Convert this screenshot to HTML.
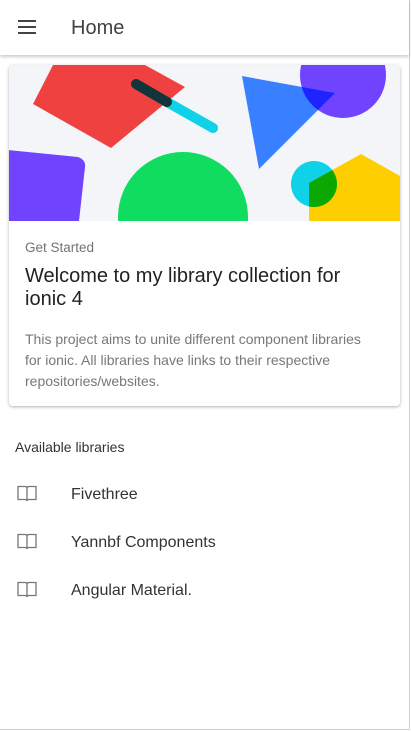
<!DOCTYPE html>
<html><head><meta charset="utf-8"><style>
*{margin:0;padding:0;box-sizing:border-box}
html,body{width:411px;height:731px;overflow:hidden;background:#fff;font-family:"Liberation Sans",Roboto,sans-serif}
.frame{position:absolute;left:0;top:0;width:410px;height:730px;border-right:1px solid #d0d0d0;border-bottom:1px solid #d0d0d0}
.hdr{position:absolute;left:0;top:0;width:409px;height:55px;background:#fff;box-shadow:0 2px 3px rgba(0,0,0,.2)}
.ham{position:absolute;left:18px;top:20px;width:18px}
.ham i{display:block;height:2px;background:#424242;margin-bottom:4px}
.title{position:absolute;left:71px;top:17px;font-size:20px;color:#424242}
.card{position:absolute;left:9px;top:65px;width:391px;height:341px;background:#fff;border-radius:4px;box-shadow:0 1px 3px rgba(0,0,0,.3);overflow:hidden}
.sub{position:absolute;left:16px;top:175px;font-size:13.5px;color:#737373}
.h{position:absolute;left:16px;top:200px;font-size:20px;line-height:23px;color:#222;width:340px}
.p{position:absolute;left:16px;top:264px;font-size:14px;line-height:21px;color:#777;width:350px}
.lh{position:absolute;left:15px;top:439px;font-size:14px;color:#333}
.item{position:absolute;left:71px;font-size:16px;color:#333}
.bk{position:absolute;left:17px}
</style></head><body>
<div class="frame"></div>
<div class="hdr"><div class="ham"><i></i><i></i><i></i></div><div class="title">Home</div></div>
<div class="card">
<svg width="391" height="156" viewBox="9 65 391 156" style="position:absolute;left:0;top:0">
<rect x="9" y="65" width="391" height="156" fill="#f4f5f8"/>
<polygon points="53,65 145,65 185,87 111,148 33,104" fill="#f04141"/>
<line x1="167" y1="102" x2="213" y2="128" stroke="#0fd2e8" stroke-width="10" stroke-linecap="round"/>
<line x1="136" y1="84" x2="167" y2="102" stroke="#12343b" stroke-width="10" stroke-linecap="round"/>
<circle cx="343" cy="75" r="43" fill="#7044ff"/>
<polygon points="242,76 335,93 259,169" fill="#3880ff" />
<clipPath id="c1"><circle cx="343" cy="75" r="43"/></clipPath>
<polygon points="242,76 335,93 259,169" fill="#1d24ff" clip-path="url(#c1)"/>
<path d="M8,150 L78,157 Q86,160 85,167 L79,221 L8,221Z" fill="#7044ff"/>
<circle cx="183" cy="217" r="65" fill="#10dc60"/>
<circle cx="314" cy="184" r="23" fill="#0fd2e8"/>
<polygon points="309,183 361,154 400,176 400,221 309,221" fill="#ffce00"/>
<clipPath id="c2"><polygon points="309,183 361,154 400,176 400,221 309,221"/></clipPath>
<circle cx="314" cy="184" r="23" fill="#0aa800" clip-path="url(#c2)"/>
</svg>
<div class="sub">Get Started</div>
<div class="h">Welcome to my library collection for ionic 4</div>
<div class="p">This project aims to unite different component libraries for ionic. All libraries have links to their respective repositories/websites.</div>
</div>
<div class="lh">Available libraries</div>
<svg class="bk" style="top:485px" width="20" height="17" viewBox="0 0 20 17"><path d="M1 1.5 H8 Q10 1.5 10 3.5 V16 Q10 14.5 8 14.5 H1Z M19 1.5 H12 Q10 1.5 10 3.5 V16 Q10 14.5 12 14.5 H19Z" fill="none" stroke="#777" stroke-width="1.3"/></svg>
<div class="item" style="top:486px">Fivethree</div>
<svg class="bk" style="top:533px" width="20" height="17" viewBox="0 0 20 17"><path d="M1 1.5 H8 Q10 1.5 10 3.5 V16 Q10 14.5 8 14.5 H1Z M19 1.5 H12 Q10 1.5 10 3.5 V16 Q10 14.5 12 14.5 H19Z" fill="none" stroke="#777" stroke-width="1.3"/></svg>
<div class="item" style="top:534px">Yannbf Components</div>
<svg class="bk" style="top:581px" width="20" height="17" viewBox="0 0 20 17"><path d="M1 1.5 H8 Q10 1.5 10 3.5 V16 Q10 14.5 8 14.5 H1Z M19 1.5 H12 Q10 1.5 10 3.5 V16 Q10 14.5 12 14.5 H19Z" fill="none" stroke="#777" stroke-width="1.3"/></svg>
<div class="item" style="top:582px">Angular Material.</div>
</body></html>
